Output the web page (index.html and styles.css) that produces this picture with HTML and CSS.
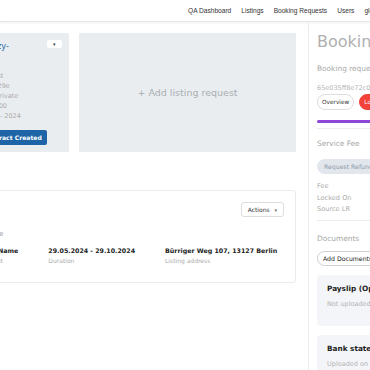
FILE: index.html
```html
<!DOCTYPE html>
<html lang="en">
<head>
  <meta charset="UTF-8" />
  <meta name="viewport" content="width=device-width, initial-scale=1.0"/>
  <title>Booking Request</title>
  <link rel="stylesheet" href="styles.css">
</head>
<body>

<div class="navbar">
  <div class="brand"></div>
  <a href="#">QA Dashboard</a>
  <a href="#">Listings</a>
  <a href="#">Booking Requests</a>
  <a href="#">Users</a>
  <a href="#">global</a>
</div>

<div class="page">
  <div class="content">
    <div class="cards">
      <div class="listing-card">
        <div class="listing-head">
          <a class="listing-title" href="#">A Cozy-<br>Flat</a>
          <button class="mini-drop">&#9662;</button>
        </div>
        <div class="listing-info">
          <p>Unit 1st</p>
          <p>ID 21f29e</p>
          <p>Bath private</p>
          <p>&euro; 11.200</p>
          <p>March - 2024</p>
        </div>
        <button class="status-btn">Contract Created</button>
      </div>
      <div class="add-card">+ Add listing request</div>
    </div>

    <div class="booking-card">
      <div class="booking-head">
        <span class="small-label">Profile</span>
        <button class="actions">Actions <span class="caret">&#9662;</span></button>
      </div>
      <div class="booking-row">
        <div class="field">
          <strong>Full Name</strong>
          <span>Tenant</span>
        </div>
        <div class="field">
          <strong>29.05.2024 - 29.10.2024</strong>
          <span>Duration</span>
        </div>
        <div class="field">
          <strong>Bürriger Weg 107, 13127 Berlin</strong>
          <span>Listing address</span>
        </div>
      </div>
    </div>
  </div>

  <div class="sidebar">
    <h1>Booking Request</h1>
    <p class="sub">Booking request details</p>
    <p class="id">65e035ff8e72c0d19e</p>
    <div class="tabs">
      <span class="pill">Overview</span>
      <span class="pill red">Locked</span>
    </div>
    <div class="progress"></div>

    <div class="block">
      <h3>Service Fee</h3>
      <span class="pill soft">Request Refund</span>
      <div class="fee-list">
        <p>Fee</p>
        <p>Locked On</p>
        <p>Source LR</p>
      </div>
    </div>

    <div class="block docs">
      <h3>Documents</h3>
      <span class="pill outline">Add Documents</span>
      <div class="doc">
        <h4>Payslip (Optional)</h4>
        <p>Not uploaded yet</p>
      </div>
      <div class="doc">
        <h4>Bank statement</h4>
        <p>Uploaded on 12.03.2024</p>
      </div>
    </div>
  </div>
</div>

</body>
</html>
```

FILE: styles.css
```css
* {
  box-sizing: border-box;
  margin: 0;
  padding: 0;
}
body {
  font-family: "DejaVu Sans", sans-serif;
  background-color: #fff;
  overflow: hidden;
  width: 370px;
  height: 370px;
}
.navbar {
  display: flex;
  align-items: center;
  gap: 10px;
  height: 22px;
  border-bottom: 1px solid #e6e6e6;
  box-shadow: 0 1px 3px rgba(0,0,0,0.06);
  white-space: nowrap;
}
.navbar .brand {
  width: 178px;
  flex-shrink: 0;
}
.navbar a {
  font-family: "Liberation Sans", Arial, sans-serif;
  font-size: 6.6px;
  color: #333;
  text-decoration: none;
}
.page {
  display: flex;
  margin-left: -30px;
  width: 560px;
}
.content {
  width: 326px;
  flex-shrink: 0;
  padding-top: 11px;
}
.cards {
  display: grid;
  grid-template-columns: 99px 217px;
  gap: 10px;
  height: 118px;
}
.listing-card {
  background-color: #eaedf0;
  padding: 7px 7px 7px 8px;
  display: flex;
  flex-direction: column;
}
.listing-head {
  display: flex;
  justify-content: space-between;
  align-items: flex-start;
}
.listing-title {
  color: #2b6aa6;
  font-size: 8.2px;
  line-height: 10px;
  text-decoration: none;
  margin-top: 1px;
}
.mini-drop {
  width: 15px;
  height: 8px;
  background-color: #fff;
  border: none;
  border-radius: 2px;
  font-size: 5px;
  color: #333;
  line-height: 8px;
}
.listing-info {
  margin-top: 10px;
  font-size: 6.5px;
  line-height: 10px;
  color: #aaa;
}
.status-btn {
  align-self: flex-start;
  margin-top: 9px;
  background-color: #1d65a6;
  color: #fff;
  border: none;
  border-radius: 2px;
  font-family: inherit;
  font-size: 6.1px;
  font-weight: bold;
  padding: 0 5px;
  height: 15px;
}
.add-card {
  background-color: #eaedf0;
  display: flex;
  align-items: center;
  justify-content: center;
  font-size: 9.5px;
  color: #a9adb3;
}
.booking-card {
  margin-top: 39px;
  border: 1px solid #ebebeb;
  border-radius: 3px;
  height: 93px;
  padding: 11px 11px 0 12px;
}
.booking-head {
  display: flex;
  justify-content: space-between;
  align-items: flex-end;
  height: 32px;
}
.small-label {
  font-size: 6.5px;
  color: #888;
  margin-bottom: -4px;
}
.actions {
  align-self: flex-start;
  background-color: #fff;
  border: 1px solid #ddd;
  border-radius: 3px;
  font-family: inherit;
  font-size: 6px;
  color: #333;
  padding: 0 6px;
  height: 15px;
}
.actions .caret {
  font-size: 5px;
  margin-left: 3px;
  color: #666;
}
.booking-row {
  display: flex;
  gap: 30px;
  margin-top: 13px;
}
.field strong {
  display: block;
  font-size: 6.3px;
  color: #222;
}
.field span {
  display: block;
  font-size: 6px;
  color: #aaa;
  margin-top: 3px;
}
.sidebar {
  margin-left: 12px;
  border-left: 1px solid #ececec;
  padding: 10px 0 0 8px;
  width: 210px;
  white-space: nowrap;
  min-height: 360px;
}
.sidebar h1 {
  font-size: 16px;
  font-weight: normal;
  color: #b0b0b0;
  line-height: 20px;
}
.sidebar .sub {
  margin-top: 12px;
  font-size: 7.4px;
  color: #aaa;
}
.sidebar .id {
  margin-top: 11px;
  font-size: 6.5px;
  color: #b5b5b5;
}
.tabs {
  display: flex;
  gap: 5px;
  margin-top: 2px;
}
.pill {
  display: inline-flex;
  align-items: center;
  height: 16px;
  padding: 0 4px;
  border-radius: 8px;
  border: 1px solid #ddd;
  font-size: 5.8px;
  color: #333;
  background-color: #fff;
}
.block .pill {
  display: flex;
  width: fit-content;
}
.pill.red {
  background-color: #f2423a;
  border-color: #f2423a;
  color: #fff;
}
.pill.soft {
  background-color: #e2e7ee;
  border-color: #e2e7ee;
  color: #8f99a8;
  height: 15px;
  padding: 0 6px;
  font-size: 6.2px;
}
.pill.outline {
  border-color: #d0d0d0;
  color: #222;
  height: 15px;
  padding: 0 5px;
  font-size: 6.2px;
}
.progress {
  margin-top: 10px;
  height: 3px;
  background-color: #8d47d6;
  border-radius: 2px;
}
.block {
  border-top: 1px solid #ededed;
  margin-top: 5px;
  padding-top: 10px;
}
.block h3 {
  font-size: 7.4px;
  font-weight: normal;
  color: #a6a6a6;
  margin-bottom: 11px;
}
.block.docs {
  margin-top: 4px;
  padding-top: 13px;
}
.block.docs h3 {
  margin-bottom: 8px;
}
.fee-list {
  margin-top: 7px;
  font-size: 6.6px;
  line-height: 11.5px;
  color: #aaa;
}
.doc {
  margin-top: 9px;
  background-color: #f3f5f8;
  border-radius: 4px;
  padding: 9px 10px 0;
  height: 51px;
}
.doc h4 {
  font-size: 7.3px;
  color: #222;
}
.doc p {
  margin-top: 7px;
  font-size: 6.5px;
  color: #b4b4b4;
}
```
